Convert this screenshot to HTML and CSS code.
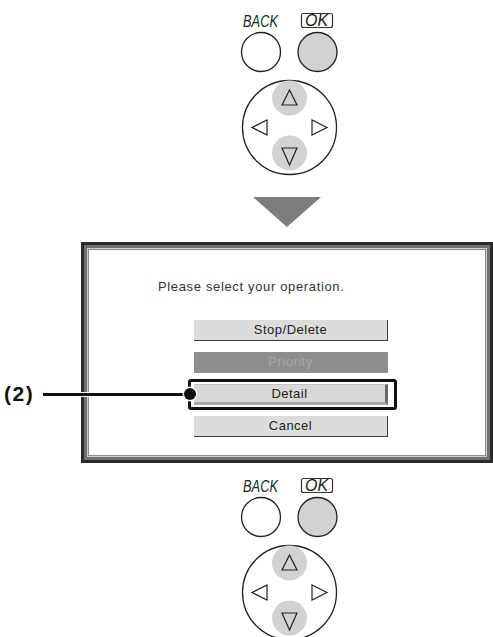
FILE: index.html
```html
<!DOCTYPE html>
<html lang="en">
<head>
  <meta charset="UTF-8" />
  <meta name="viewport" content="width=device-width, initial-scale=1.0"/>
  <title>Job status - select operation</title>
  <link rel="stylesheet" href="styles.css">
</head>
<body>
  <svg class="keys" width="100" height="180" viewBox="0 0 100 180">
    <text x="3" y="27" class="key-label" textLength="35" lengthAdjust="spacingAndGlyphs">BACK</text>
    <rect x="61.5" y="13.5" width="31" height="14" rx="2" class="ok-box"/>
    <text x="65" y="26" class="key-label" textLength="23" lengthAdjust="spacingAndGlyphs">OK</text>
    <circle cx="21" cy="52" r="19.5" class="key"/>
    <circle cx="77.5" cy="52" r="19.5" class="key key-on"/>
    <circle cx="49.5" cy="127.5" r="47" class="key"/>
    <circle cx="49.5" cy="98" r="17.5" class="pad-on"/>
    <circle cx="49.5" cy="153" r="17.5" class="pad-on"/>
    <g class="tri">
      <path d="M49.5 90 L42 105 H57 Z"/>
      <path d="M42 148 H57 L49.5 165 Z"/>
      <path d="M12 127.5 L27 120 V135 Z"/>
      <path d="M87 127.5 L72 120 V135 Z"/>
    </g>
  </svg>

  <div class="arrow"></div>

  <div class="stage">
    <div class="screen">
      <p class="prompt">Please select your operation.</p>
      <div class="menu">
        <div class="btn">Stop/Delete</div>
        <div class="btn btn-off">Priority</div>
        <div class="btn btn-sel">Detail</div>
        <div class="btn">Cancel</div>
      </div>
    </div>

    <!-- callout (2) -->
    <div class="callout">
      <span class="callout-num">(2)</span>
      <span class="callout-line"></span>
      <span class="callout-dot"></span>
    </div>
  </div>

  <svg class="keys keys-bottom" width="100" height="180" viewBox="0 0 100 180">
    <text x="3" y="27" class="key-label" textLength="35" lengthAdjust="spacingAndGlyphs">BACK</text>
    <rect x="61.5" y="13.5" width="31" height="14" rx="2" class="ok-box"/>
    <text x="65" y="26" class="key-label" textLength="23" lengthAdjust="spacingAndGlyphs">OK</text>
    <circle cx="21" cy="52" r="19.5" class="key"/>
    <circle cx="77.5" cy="52" r="19.5" class="key key-on"/>
    <circle cx="49.5" cy="127.5" r="47" class="key"/>
    <circle cx="49.5" cy="98" r="17.5" class="pad-on"/>
    <circle cx="49.5" cy="153" r="17.5" class="pad-on"/>
    <g class="tri">
      <path d="M49.5 90 L42 105 H57 Z"/>
      <path d="M42 148 H57 L49.5 165 Z"/>
      <path d="M12 127.5 L27 120 V135 Z"/>
      <path d="M87 127.5 L72 120 V135 Z"/>
    </g>
  </svg>
</body>
</html>
```

FILE: styles.css
```css
body {
  margin: 0;
  background: #fff;
  font-family: 'Liberation Sans', Arial, sans-serif;
  overflow: hidden;
}
.keys {
  display: block;
  margin-left: 240px;
}
.keys-bottom {
  margin-top: 2px;
}
.key-label {
  font-family: 'Liberation Sans', Arial, sans-serif;
  font-style: italic;
  font-size: 16px;
  fill: #222;
}
.ok-box {
  fill: none;
  stroke: #333;
  stroke-width: 1.2;
}
.key {
  fill: #fff;
  stroke: #222;
  stroke-width: 1.3;
}
.key-on {
  fill: #d2d2d2;
}
.pad-on {
  fill: #d2d2d2;
}
.tri path {
  fill: none;
  stroke: #222;
  stroke-width: 1.2;
}
.arrow {
  width: 0;
  height: 0;
  border-left: 34.5px solid transparent;
  border-right: 34.5px solid transparent;
  border-top: 30px solid #7d7d7d;
  margin: 17px 0 15px 253px;
}
.stage {
  position: relative;
}
.screen {
  box-sizing: border-box;
  width: 412px;
  height: 221px;
  margin-left: 81px;
  border: 3px solid #2b2b2b;
  box-shadow: inset 0 0 0 3px #707070, inset 0 0 0 4px #cfcfcf, inset 0 0 0 5px #8c8c8c;
  padding-top: 34px;
}
.prompt {
  margin: 0 0 25px 74px;
  font-size: 13px;
  line-height: 16px;
  letter-spacing: 0.65px;
  color: #333;
}
.menu {
  margin-left: 110px;
  width: 194px;
  display: flex;
  flex-direction: column;
  gap: 11px;
}
.btn {
  box-sizing: border-box;
  height: 21px;
  line-height: 20px;
  text-align: center;
  font-size: 13px;
  letter-spacing: 0.5px;
  color: #222;
  background: #dcdcdc;
  border-right: 1px solid #3a3a3a;
  border-bottom: 1px solid #3a3a3a;
}
.btn-off {
  background: #8e8e8e;
  color: #a9a9a9;
  border-color: #8e8e8e;
}
.btn-sel {
  position: relative;
  background: #d8d8d8;
  border-top: 1px solid #c4c4c4;
  border-right: 3px solid #6a6a6a;
  border-bottom: 3px solid #a9a9a9;
  line-height: 17px;
}
.btn-sel::before {
  content: "";
  position: absolute;
  left: -6px;
  top: -6px;
  right: -12px;
  bottom: -8px;
  border: 3px solid #111;
  border-radius: 3px;
}
.callout {
  position: absolute;
  left: 4px;
  top: 141px;
  height: 22px;
  display: flex;
  align-items: center;
}
.callout-num {
  font-weight: bold;
  font-size: 21px;
  letter-spacing: 1.5px;
  color: #111;
  width: 39px;
}
.callout-line {
  width: 143px;
  height: 3px;
  background: #111;
  box-shadow: 0 0 0 1px #fff;
}
.callout-dot {
  width: 12px;
  height: 12px;
  margin-left: -2px;
  border-radius: 50%;
  background: #111;
  box-shadow: 0 0 0 1.5px #fff;
}
```
